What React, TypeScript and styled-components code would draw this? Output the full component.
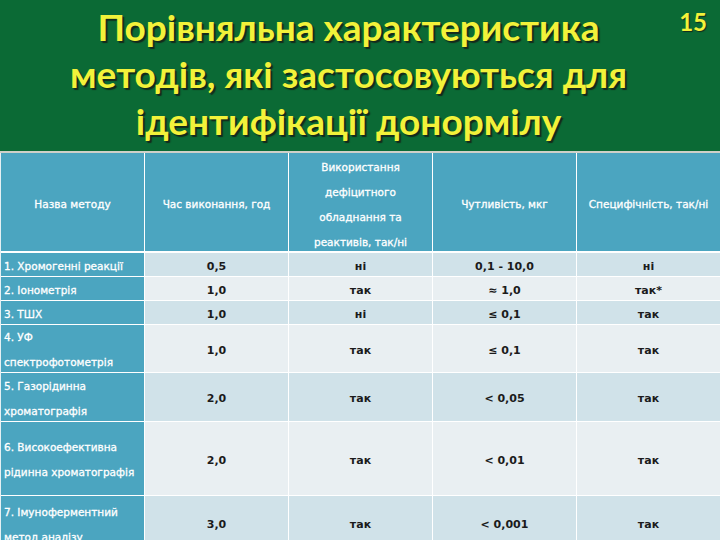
import React from 'react'
import styled, { createGlobalStyle } from 'styled-components'

type MethodRow = {
  name: string[]
  time: string
  deficit: string
  sensitivity: string
  specificity: string
  height: number
}

const rows: MethodRow[] = [
  { name: ['1. Хромогенні реакції'], time: '0,5', deficit: 'ні', sensitivity: '0,1 - 10,0', specificity: 'ні', height: 23 },
  { name: ['2. Іонометрія'], time: '1,0', deficit: 'так', sensitivity: '≈ 1,0', specificity: 'так*', height: 23 },
  { name: ['3. ТШХ'], time: '1,0', deficit: 'ні', sensitivity: '≤ 0,1', specificity: 'так', height: 23 },
  { name: ['4. УФ', 'спектрофотометрія'], time: '1,0', deficit: 'так', sensitivity: '≤ 0,1', specificity: 'так', height: 47 },
  { name: ['5. Газорідинна', 'хроматографія'], time: '2,0', deficit: 'так', sensitivity: '< 0,05', specificity: 'так', height: 48 },
  { name: ['6. Високоефективна', 'рідинна хроматографія'], time: '2,0', deficit: 'так', sensitivity: '< 0,01', specificity: 'так', height: 73 },
  { name: ['7. Імуноферментний', 'метод аналізу'], time: '3,0', deficit: 'так', sensitivity: '< 0,001', specificity: 'так', height: 54 },
]

const headers: string[][] = [
  ['Назва методу'],
  ['Час виконання, год'],
  ['Використання', 'дефіцитного', 'обладнання та', 'реактивів, так/ні'],
  ['Чутливість, мкг'],
  ['Специфічність, так/ні'],
]

const GlobalStyle = createGlobalStyle`
  html, body {
    margin: 0;
    padding: 0;
    background: #ffffff;
  }
  body {
    font-family: 'DejaVu Sans', Verdana, sans-serif;
  }
`

const Slide = styled.div`
  width: 720px;
  height: 540px;
  overflow: hidden;
  background: #ffffff;
`

const Header = styled.header`
  position: relative;
  height: 151px;
  background: #0b6a35;
  border-bottom: 2px solid #cfd0c8;
  box-sizing: content-box;
`

const Title = styled.h1`
  margin: 0;
  width: 697px;
  padding-top: 3px;
  font-family: Lato, 'Open Sans', sans-serif;
  font-weight: 700;
  font-size: 37px;
  line-height: 47px;
  text-align: center;
  color: #f2f23a;
  text-shadow: 2px 2px 1px #142a1c, 1px 1px 0 #1f4a2b;
`

const SlideNumber = styled.span`
  position: absolute;
  top: 10px;
  right: 13px;
  font-family: Lato, 'Open Sans', sans-serif;
  font-weight: 700;
  font-size: 24px;
  line-height: 1;
  color: #f2f23a;
  text-shadow: 1px 1px 1px #142a1c;
`

const Table = styled.div<{ $rows: string }>`
  display: grid;
  grid-template-columns: repeat(5, 1fr);
  grid-template-rows: ${p => p.$rows};
  gap: 1px;
  background: #ffffff;
  border-left: 1px solid #e6f0f3;
`

const HeadCell = styled.div`
  display: flex;
  align-items: center;
  justify-content: center;
  flex-direction: column;
  padding-top: 5px;
  box-sizing: border-box;
  background: #4ba5c0;
  border-bottom: 1px solid #ffffff;
  color: #ffffff;
  font-size: 10.5px;
  line-height: 25px;
  text-align: center;
  white-space: nowrap;
  overflow: hidden;
  -webkit-text-stroke: 0.3px #ffffff;
`

const NameCell = styled.div`
  display: flex;
  flex-direction: column;
  justify-content: center;
  padding: 3px 0 0 3px;
  box-sizing: border-box;
  background: #4ba5c0;
  color: #ffffff;
  font-size: 10.5px;
  line-height: 25px;
  white-space: nowrap;
  -webkit-text-stroke: 0.3px #ffffff;
`

const DataCell = styled.div<{ $shade: boolean }>`
  display: flex;
  align-items: center;
  justify-content: center;
  padding-top: 3px;
  box-sizing: border-box;
  background: ${p => (p.$shade ? '#d0e2e9' : '#e9eff2')};
  color: #1b1b1b;
  font-size: 11px;
  font-weight: 700;
  white-space: nowrap;
`

export default function App() {
  const template = ['99px', ...rows.map(r => `${r.height}px`)].join(' ')

  return (
    <>
      <GlobalStyle />
      <Slide>
        <Header>
          <Title>
            Порівняльна характеристика
            <br />
            методів, які застосовуються для
            <br />
            ідентифікації донормілу
          </Title>
          <SlideNumber>15</SlideNumber>
        </Header>
        <Table $rows={template}>
          {headers.map((lines, i) => (
            <HeadCell key={`h${i}`}>
              {lines.map(l => (
                <span key={l}>{l}</span>
              ))}
            </HeadCell>
          ))}
          {rows.map((row, i) => {
            const shade = i % 2 === 0
            return (
              <React.Fragment key={row.name[0]}>
                <NameCell>
                  {row.name.map(l => (
                    <span key={l}>{l}</span>
                  ))}
                </NameCell>
                <DataCell $shade={shade}>{row.time}</DataCell>
                <DataCell $shade={shade}>{row.deficit}</DataCell>
                <DataCell $shade={shade}>{row.sensitivity}</DataCell>
                <DataCell $shade={shade}>{row.specificity}</DataCell>
              </React.Fragment>
            )
          })}
        </Table>
      </Slide>
    </>
  )
}
